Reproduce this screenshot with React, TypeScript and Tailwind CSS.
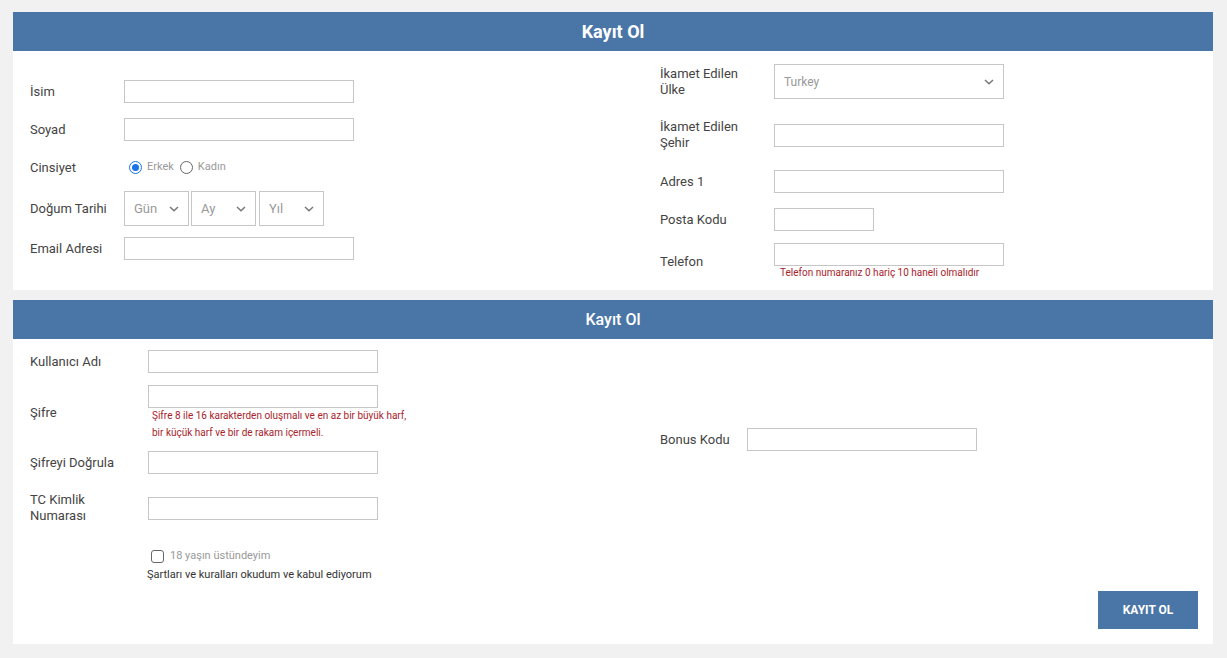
import React from 'react';

const font = { fontFamily: 'Roboto, "Noto Sans", sans-serif' };

const Input = ({ w = 'w-[230px]' }: { w?: string }) => (
  <input className={`${w} h-[23px] border border-[#c6c6c6] bg-white outline-none`} />
);

const Chevron = () => (
  <svg width="10" height="6" viewBox="0 0 10 6" className="absolute right-[9px] top-1/2 -translate-y-1/2 pointer-events-none">
    <path d="M1 1l4 3.8L9 1" fill="none" stroke="#777" strokeWidth="1.5" />
  </svg>
);

const Select = ({ label, w, size = 'text-[13px]' }: { label: string; w: string; size?: string }) => (
  <div className={`relative ${w} h-[35px] border border-[#c6c6c6] bg-white`}>
    <div className={`h-full flex items-center pl-[9px] ${size} text-[#999]`}>{label}</div>
    <Chevron />
  </div>
);

const Header = ({ title, big }: { title: string; big?: boolean }) => (
  <div className="h-[39px] bg-[#4a76a7] flex items-center justify-center text-white">
    <span className={big ? 'text-[18px] font-bold' : 'text-[16px] font-medium'}>{title}</span>
  </div>
);

export default function App() {
  return (
    <div className="min-h-[658px] bg-[#f1f1f1] pt-[12px] px-[13px] pb-[14px]" style={font}>
      {/* first panel */}
      <div className="w-[1200px] bg-white">
        <Header title="Kayıt Ol" big />
        <div className="grid grid-cols-2 h-[239px] text-[13px] text-[#444]">
          <div className="pl-[17px] pt-[29px]">
            <div className="flex items-center h-[23px]">
              <label className="w-[94px]">İsim</label>
              <Input />
            </div>
            <div className="flex items-center h-[23px] mt-[15px]">
              <label className="w-[94px]">Soyad</label>
              <Input />
            </div>
            <div className="flex items-center h-[23px] mt-[15px]">
              <label className="w-[94px]">Cinsiyet</label>
              <div className="flex items-center gap-[5px] text-[11px] text-[#999]">
                <span className="w-[13px] h-[13px] rounded-full border border-[#1a73e8] flex items-center justify-center ml-[5px]">
                  <span className="w-[7px] h-[7px] rounded-full bg-[#1a73e8]" />
                </span>
                <span>Erkek</span>
                <span className="w-[13px] h-[13px] rounded-full border border-[#666] ml-[1px]" />
                <span>Kadın</span>
              </div>
            </div>
            <div className="flex items-center h-[35px] mt-[12px]">
              <label className="w-[94px]">Doğum Tarihi</label>
              <div className="flex gap-[2px]">
                <Select label="Gün" w="w-[65px]" />
                <Select label="Ay" w="w-[65px]" />
                <div className="ml-[1px]">
                  <Select label="Yıl" w="w-[65px]" />
                </div>
              </div>
            </div>
            <div className="flex items-center h-[23px] mt-[11px]">
              <label className="w-[94px]">Email Adresi</label>
              <Input />
            </div>
          </div>
          <div className="pl-[47px] pt-[13px]">
            <div className="flex items-center h-[35px]">
              <label className="w-[114px] leading-[16px]">İkamet Edilen<br />Ülke</label>
              <Select label="Turkey" w="w-[230px]" size="text-[12px]" />
            </div>
            <div className="flex items-center h-[32px] mt-[20px]">
              <label className="w-[114px] leading-[16px]">İkamet Edilen<br />Şehir</label>
              <Input />
            </div>
            <div className="flex items-center h-[23px] mt-[19px]">
              <label className="w-[114px]">Adres 1</label>
              <Input />
            </div>
            <div className="flex items-center h-[23px] mt-[15px]">
              <label className="w-[114px]">Posta Kodu</label>
              <Input w="w-[100px]" />
            </div>
            <div className="flex items-center mt-[12px]">
              <label className="w-[114px]">Telefon</label>
              <div className="flex flex-col">
                <Input />
                <span className="text-[10px] leading-[14px] text-[#a8232b] pl-[6px]">
                  Telefon numaranız 0 hariç 10 haneli olmalıdır
                </span>
              </div>
            </div>
          </div>
        </div>
      </div>

      {/* second panel */}
      <div className="w-[1200px] bg-white mt-[10px]">
        <Header title="Kayıt Ol" />
        <div className="grid grid-cols-2 text-[13px] text-[#444]">
          <div className="pl-[17px] pt-[11px]">
            <div className="flex items-center h-[23px]">
              <label className="w-[118px]">Kullanıcı Adı</label>
              <Input />
            </div>
            <div className="flex items-center mt-[12px]">
              <label className="w-[118px]">Şifre</label>
              <div className="flex flex-col">
                <Input />
                <span className="text-[10px] leading-[17px] text-[#a8232b] pl-[4px] -mt-[1px]">
                  Şifre 8 ile 16 karakterden oluşmalı ve en az bir büyük harf,
                  <br />
                  bir küçük harf ve bir de rakam içermeli.
                </span>
              </div>
            </div>
            <div className="flex items-center h-[23px] mt-[10px]">
              <label className="w-[118px]">Şifreyi Doğrula</label>
              <Input />
            </div>
            <div className="flex items-center h-[32px] mt-[18px]">
              <label className="w-[118px] leading-[16px]">TC Kimlik<br />Numarası</label>
              <Input />
            </div>
            <div className="pl-[117px] mt-[25px]">
              <div className="flex items-center gap-[6px] pl-[4px] h-[14px]">
                <span className="w-[13px] h-[13px] rounded-[3px] border border-[#666] bg-white" />
                <span className="text-[11px] text-[#999]">18 yaşın üstündeyim</span>
              </div>
              <div className="text-[11px] text-[#333] mt-[4px] leading-[16px]">
                Şartları ve kuralları okudum ve kabul ediyorum
              </div>
            </div>
          </div>
          <div className="pl-[47px] pt-[89px]">
            <div className="flex items-center h-[23px]">
              <label className="w-[87px]">Bonus Kodu</label>
              <Input />
            </div>
          </div>
        </div>
        <div className="flex justify-end pr-[15px] pb-[15px] mt-[8px]">
          <button className="w-[100px] h-[38px] bg-[#4a76a7] text-white text-[12px] font-bold">
            KAYIT OL
          </button>
        </div>
      </div>
    </div>
  );
}
